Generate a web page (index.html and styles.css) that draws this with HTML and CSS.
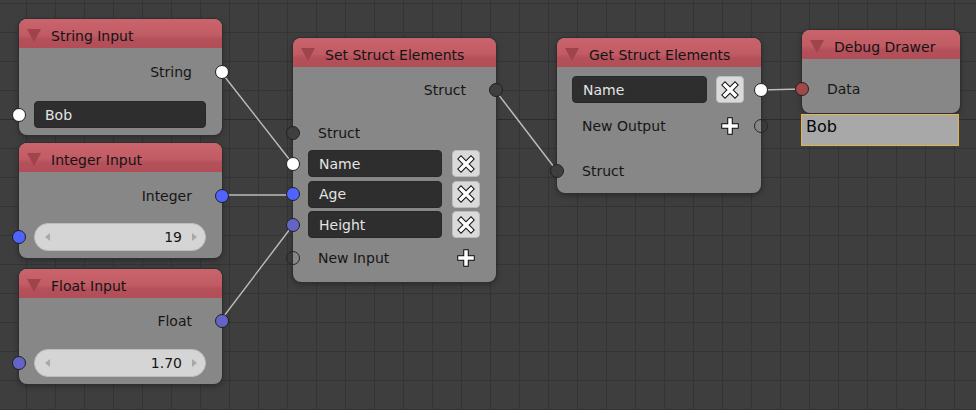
FILE: index.html
```html
<!DOCTYPE html>
<html>
<head>
<meta charset="utf-8">
<link rel="stylesheet" href="styles.css">
</head>
<body>
<div class="canvas">
  <div class="major-line"></div>
  <svg class="links" width="976" height="410" viewBox="0 0 976 410">
    <line x1="221" y1="72" x2="293" y2="164"/>
    <line x1="221" y1="195" x2="293" y2="195"/>
    <line x1="221" y1="320" x2="293" y2="225"/>
    <line x1="495" y1="90" x2="557" y2="171"/>
    <line x1="760" y1="90" x2="802" y2="89"/>
  </svg>

  <!-- String Input -->
  <div class="node n-string">
    <div class="head"><span class="tri"></span><span class="title">String Input</span></div>
    <div class="body">
      <div class="row out first"><span class="lbl">String</span><span class="sock right s-white"></span></div>
      <div class="frow mt15"><div class="tfield">Bob</div><span class="sock left s-white"></span></div>
    </div>
  </div>

  <!-- Integer Input -->
  <div class="node n-int">
    <div class="head"><span class="tri"></span><span class="title">Integer Input</span></div>
    <div class="body">
      <div class="row out first"><span class="lbl">Integer</span><span class="sock right s-blue"></span></div>
      <div class="frow mt13"><div class="nfield"><span class="arr l"></span><span class="val">19</span><span class="arr r"></span></div><span class="sock left s-blue"></span></div>
    </div>
  </div>

  <!-- Float Input -->
  <div class="node n-float">
    <div class="head"><span class="tri"></span><span class="title">Float Input</span></div>
    <div class="body">
      <div class="row out first9"><span class="lbl">Float</span><span class="sock right s-purple"></span></div>
      <div class="frow mt14"><div class="nfield"><span class="arr l"></span><span class="val">1.70</span><span class="arr r"></span></div><span class="sock left s-purple"></span></div>
    </div>
  </div>

  <!-- Set Struct Elements -->
  <div class="node n-set">
    <div class="head"><span class="tri"></span><span class="title">Set Struct Elements</span></div>
    <div class="body set-body">
      <div class="row out"><span class="lbl">Struct</span><span class="sock right s-dark"></span></div>
      <div class="row in mt15"><span class="lbl">Struct</span><span class="sock left s-dark"></span></div>
      <div class="erows">
        <div class="erow"><div class="tfield">Name</div><button class="xbtn"><svg viewBox="0 0 18 18" width="18" height="18"><path class="o" d="M4 4 L14 14 M14 4 L4 14"/><path class="f" d="M4 4 L14 14 M14 4 L4 14"/></svg></button><span class="sock left s-white"></span></div>
        <div class="erow"><div class="tfield">Age</div><button class="xbtn"><svg viewBox="0 0 18 18" width="18" height="18"><path class="o" d="M4 4 L14 14 M14 4 L4 14"/><path class="f" d="M4 4 L14 14 M14 4 L4 14"/></svg></button><span class="sock left s-blue"></span></div>
        <div class="erow"><div class="tfield">Height</div><button class="xbtn"><svg viewBox="0 0 18 18" width="18" height="18"><path class="o" d="M4 4 L14 14 M14 4 L4 14"/><path class="f" d="M4 4 L14 14 M14 4 L4 14"/></svg></button><span class="sock left s-purple"></span></div>
      </div>
      <div class="row in plusrow mt6"><span class="lbl">New Input</span><span class="plus"><svg viewBox="0 0 18 18" width="18" height="18"><path class="o" d="M9 3 V15 M3 9 H15"/><path class="f" d="M9 3 V15 M3 9 H15"/></svg></span><span class="sock left s-hollow"></span></div>
    </div>
  </div>

  <!-- Get Struct Elements -->
  <div class="node n-get">
    <div class="head"><span class="tri"></span><span class="title">Get Struct Elements</span></div>
    <div class="body get-body">
      <div class="erow"><div class="tfield">Name</div><button class="xbtn"><svg viewBox="0 0 18 18" width="18" height="18"><path class="o" d="M4 4 L14 14 M14 4 L4 14"/><path class="f" d="M4 4 L14 14 M14 4 L4 14"/></svg></button><span class="sock right s-white"></span></div>
      <div class="row in plusrow mt9"><span class="lbl">New Output</span><span class="plus"><svg viewBox="0 0 18 18" width="18" height="18"><path class="o" d="M9 3 V15 M3 9 H15"/><path class="f" d="M9 3 V15 M3 9 H15"/></svg></span><span class="sock right s-hollow"></span></div>
      <div class="row in mt17"><span class="lbl">Struct</span><span class="sock left s-dark"></span></div>
    </div>
  </div>

  <!-- Debug Drawer -->
  <div class="node n-debug">
    <div class="head"><span class="tri"></span><span class="title">Debug Drawer</span></div>
    <div class="body debug-body">
      <div class="row in"><span class="lbl">Data</span><span class="sock left s-red"></span></div>
    </div>
  </div>
  <div class="debug-out">Bob</div>
</div>
</body>
</html>
```

FILE: styles.css
```css
html, body {
  margin: 0;
  padding: 0;
}
body {
  font-family: "DejaVu Sans", "Liberation Sans", sans-serif;
  font-size: 14px;
  color: #161616;
}
.canvas {
  position: relative;
  width: 976px;
  height: 410px;
  overflow: hidden;
  background-color: #3e3e3e;
  background-image:
    linear-gradient(to right, #343434 1px, transparent 1px),
    linear-gradient(to bottom, #343434 1px, transparent 1px);
  background-size: 29px 29px;
  background-position: 26px 3px;
}
.major-line {
  position: absolute;
  left: 0;
  right: 0;
  top: 119px;
  height: 1px;
  background: #2c2c2c;
}
.links {
  position: absolute;
  left: 0;
  top: 0;
}
.links line {
  stroke: #bdbdbd;
  stroke-width: 1.4;
}

/* nodes */
.node {
  position: absolute;
  background: #878787;
  border-radius: 8px;
  box-shadow: 0 0 0 1px #2f2f2f, 0 2px 6px rgba(0, 0, 0, 0.35);
}
.n-string { left: 19px; top: 19px; width: 203px; }
.n-int    { left: 19px; top: 143px; width: 203px; }
.n-float  { left: 19px; top: 269px; width: 203px; }
.n-set    { left: 293px; top: 38px; width: 203px; }
.n-get    { left: 557px; top: 38px; width: 204px; }
.n-debug  { left: 802px; top: 30px; width: 158px; }

.head {
  height: 29px;
  border-radius: 8px 8px 0 0;
  background: linear-gradient(to bottom, #c9646d 0%, #c15b64 55%, #b4505a 70%, #b24e58 100%);
  display: flex;
  align-items: center;
  padding-left: 8px;
  box-sizing: border-box;
}
.tri {
  width: 0;
  height: 0;
  border-left: 7px solid transparent;
  border-right: 7px solid transparent;
  border-top: 13px solid #a0434c;
  margin-top: 4px;
  margin-right: 10px;
}
.title {
  color: #141414;
  line-height: 1;
  padding-top: 4px;
}

.body {
  padding-bottom: 7px;
}
.row {
  position: relative;
  height: 28px;
  display: flex;
  align-items: center;
}
.row.first { margin-top: 10px; }
.row.first9 { margin-top: 9px; }
.row.out {
  justify-content: flex-end;
  padding-right: 30px;
}
.row.in {
  padding-left: 25px;
}
.mt6 { margin-top: 6px; }
.mt9 { margin-top: 9px; }
.mt13 { margin-top: 13px; }
.mt14 { margin-top: 14px; }
.mt15 { margin-top: 15px; }
.mt17 { margin-top: 17px; }

.frow {
  position: relative;
  padding: 0 16px 0 15px;
}

.tfield {
  height: 27px;
  box-sizing: border-box;
  background: #2e2e2e;
  border: 1px solid #282828;
  border-radius: 4px;
  color: #e4e4e4;
  display: flex;
  align-items: center;
  padding-left: 10px;
}
.nfield {
  height: 28px;
  box-sizing: border-box;
  background: #d5d5d5;
  border: 1px solid #bdbdbd;
  border-radius: 14px;
  display: flex;
  align-items: center;
  padding: 0 8px 0 10px;
  color: #151515;
}
.nfield .val {
  flex: 1;
  text-align: right;
  padding-right: 10px;
}
.arr {
  width: 0;
  height: 0;
  border-top: 4px solid transparent;
  border-bottom: 4px solid transparent;
}
.arr.l { border-right: 5px solid #a8a8a8; }
.arr.r { border-left: 5px solid #a8a8a8; }

/* sockets */
.sock {
  position: absolute;
  top: 50%;
  width: 14px;
  height: 14px;
  margin-top: -7px;
  border-radius: 50%;
  box-sizing: border-box;
  border: 1px solid #202020;
}
.sock.left { left: -7px; }
.sock.right { right: -7px; }
.s-white { background: #ffffff; }
.s-blue { background: #4f63ff; }
.s-purple { background: #6464c6; }
.s-dark { background: #3f3f3f; }
.s-red { background: #a24848; }
.s-hollow { background: transparent; border-color: #262626; }

/* set struct */
.set-body { padding-bottom: 10px; }
.set-body > .row.out { margin-top: 9px; }
.erows {
  margin-top: 3px;
  display: flex;
  flex-direction: column;
  gap: 3.5px;
}
.erow {
  position: relative;
  display: flex;
  align-items: center;
  padding: 0 16px 0 15px;
  gap: 10px;
}
.erow .tfield { flex: 1; }
.xbtn {
  width: 28px;
  height: 27px;
  padding: 0;
  margin: 0;
  box-sizing: border-box;
  border: 1px solid #bcbcbc;
  border-radius: 4px;
  background: #dadada;
  display: flex;
  align-items: center;
  justify-content: center;
}
.xbtn svg, .plus svg { display: block; }
svg .o {
  fill: none;
  stroke: #111;
  stroke-width: 5.5;
  stroke-linecap: square;
}
svg .f {
  fill: none;
  stroke: #fff;
  stroke-width: 3.5;
  stroke-linecap: square;
}
.plusrow { padding-right: 16px; }
.plusrow .lbl { flex: 1; }
.plus {
  width: 28px;
  display: flex;
  justify-content: center;
}

/* get struct */
.get-body { padding-top: 9px; padding-bottom: 8px; }
.get-body .erow { padding-right: 17px; gap: 9px; }
.get-body .plusrow { padding-right: 17px; }

/* debug */
.debug-body { padding-top: 16px; padding-bottom: 10px; }
.debug-out {
  position: absolute;
  left: 801px;
  top: 114px;
  width: 158px;
  height: 32px;
  box-sizing: border-box;
  background: #a8a8a8;
  border: 1px solid #e3b54a;
  color: #050505;
  font-size: 16px;
  padding: 2px 0 0 4px;
}
```
